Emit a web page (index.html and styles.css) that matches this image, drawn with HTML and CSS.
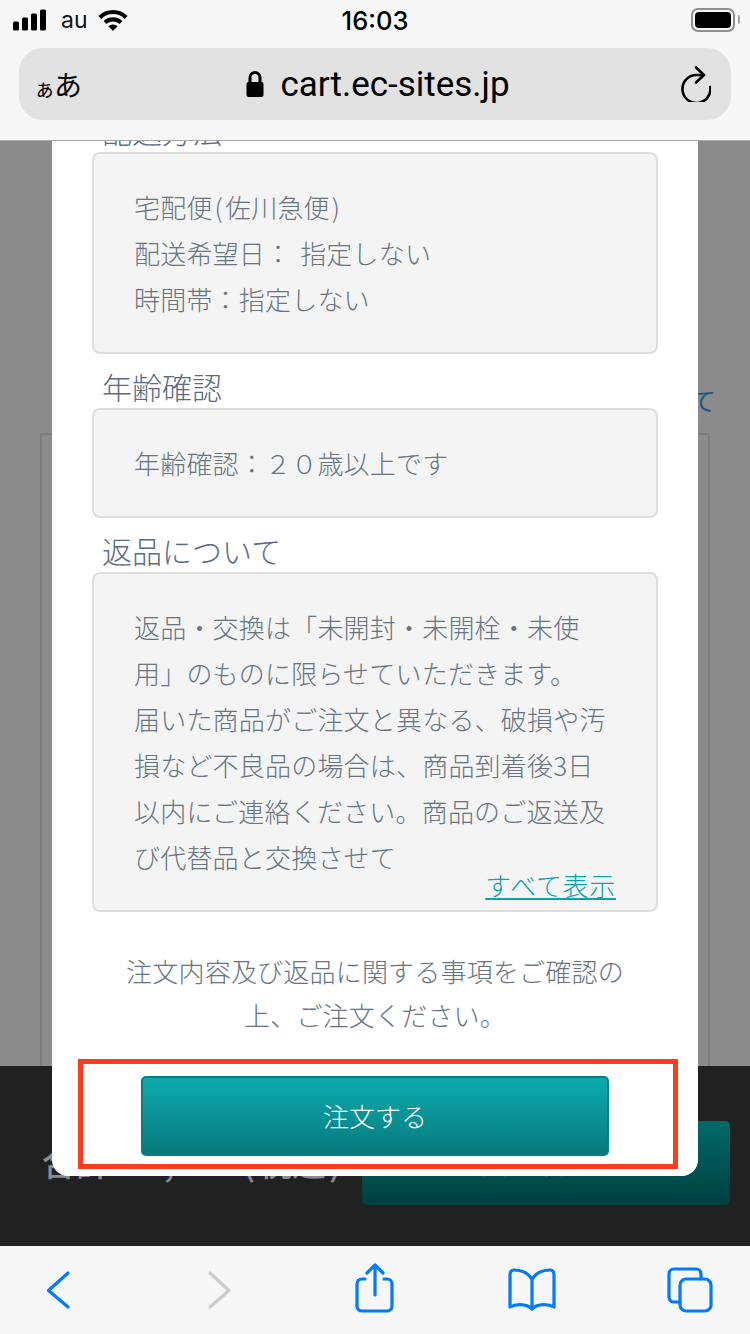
FILE: index.html
```html
<!DOCTYPE html>
<html lang="ja">
<head>
<meta charset="utf-8">
<title>注文確認</title>
<link rel="stylesheet" href="styles.css">
</head>
<body>
<div class="phone">
  <header class="chrome">
    <div class="status">
      <div class="status-left">
        <svg class="signal" viewBox="0 0 34 22"><rect x="0" y="12.500" width="6" height="9" rx="1.500"/><rect x="9" y="8.500" width="6" height="13" rx="1.500"/><rect x="18" y="4.500" width="6" height="17" rx="1.500"/><rect x="27" y="0.500" width="6" height="21" rx="1.500"/></svg>
        <span class="carrier">au</span>
        <svg class="wifi" viewBox="0 0 30 21"><path d="M15 0C9.300 0 4.200 2.200.4 5.900l2.800 3C6.300 5.900 10.400 4.100 15 4.100s8.700 1.800 11.800 4.800l2.800-3C25.800 2.200 20.700 0 15 0z"/><path d="M15 7.200c-3.700 0-7 1.400-9.500 3.800l2.900 3c1.700-1.600 4-2.600 6.600-2.600s4.900 1 6.600 2.600l2.900-3C22 8.600 18.700 7.200 15 7.200z"/><path d="M15 14.400c-1.800 0-3.400.7-4.600 1.800L15 21l4.600-4.800c-1.200-1.100-2.800-1.800-4.600-1.800z"/></svg>
      </div>
      <span class="clock">16:03</span>
      <div class="battery"><span class="battery-fill"></span></div>
    </div>
    <div class="urlbar">
      <span class="aa"><small>ぁ</small>あ</span>
      <div class="address">
        <svg class="lock" viewBox="0 0 18 26"><path class="lock-body" d="M2.500 11h13a2 2 0 0 1 2 2v11a2 2 0 0 1-2 2h-13a2 2 0 0 1-2-2V13a2 2 0 0 1 2-2z"/><path class="lock-loop" d="M4 12V6.500a5 5 0 0 1 10 0V12"/></svg>
        <span class="host">cart.ec-sites.jp</span>
      </div>
      <svg class="reload" viewBox="0 0 30 36"><path d="M22.500 9H15.300A14 14 0 1 0 29.300 21"/><path d="M15 1.500l8 7.500-8 7.500"/></svg>
    </div>
  </header>

  <main class="viewport">
    <div class="backdrop">
      <div class="bg-top">
        <span class="bg-link">すべて</span>
        <div class="bg-frame"></div>
      </div>
      <div class="bg-footer">
        <span class="bg-total">合計 ¥ 1,000 <span class="paren">(</span>税込<span class="paren">)</span></span>
        <div class="bg-button">注文を確定する</div>
      </div>
    </div>

    <section class="modal">
      <h2 class="label">配送方法</h2>
      <div class="panel">宅配便<span class="paren">(</span>佐川急便<span class="paren">)</span><br><span class="spaced">配送希望日： 指定しない</span><br>時間帯：指定しない</div>
      <h2 class="label">年齢確認</h2>
      <div class="panel">年齢確認：２０歳以上です</div>
      <h2 class="label">返品について</h2>
      <div class="panel">返品・交換は「未開封・未開栓・未使<br>用」のものに限らせていただきます。<br>届いた商品がご注文と異なる、破損や汚<br>損など不良品の場合は、商品到着後3日<br>以内にご連絡ください。商品のご返送及<br>び代替品と交換させて<a class="more" href="#">すべて表示</a></div>
      <p class="note">注文内容及び返品に関する事項をご確認の<br>上、ご注文ください。</p>
      <div class="highlight"><button class="order" type="button">注文する</button></div>
    </section>
  </main>

  <footer class="toolbar">
    <svg class="tool" viewBox="0 0 750 88"><g class="ico"><path d="M68 27 48.500 44.500 68 61"/></g><g class="ico off"><path d="M210 27l19 17.500L210 61"/></g><g class="ico"><path d="M365 33h-3a5 5 0 0 0-5 5v22a5 5 0 0 0 5 5h25a5 5 0 0 0 5-5V38a5 5 0 0 0-5-5h-3"/><path d="M375 49V20M367 27l8-8 8 8"/><path d="M532 33c-4-6-10-9-18-9-3 0-4 2-4 5v32c5-3 16-4 22 2 6-6 17-5 22-2V29c0-3-1-5-4-5-8 0-14 3-18 9zM532 33v30"/><path d="M680 56h-6a5 5 0 0 1-5-5V28a5 5 0 0 1 5-5h22a5 5 0 0 1 5 5v5"/><rect x="680" y="33" width="31" height="32" rx="6"/></g></svg>
  </footer>
</div>
</body>
</html>
```

FILE: styles.css
```css
* { box-sizing: border-box; }
html, body { margin: 0; padding: 0; }
body { font-family: "Noto Sans CJK JP", "Noto Sans", sans-serif; }

.phone { width: 750px; height: 1334px; display: flex; flex-direction: column; overflow: hidden; }

/* browser chrome */
.chrome { height: 141px; flex: none; background: #f7f7f7; border-bottom: 1px solid #a8a8a8; padding: 0 19px; position: relative; z-index: 2; }
.status { height: 48px; display: flex; align-items: center; justify-content: space-between; position: relative; margin: 0 -4px 0 -6px; padding-bottom: 8px; }
.status-left { display: flex; align-items: center; }
.signal { width: 34px; height: 22px; fill: #000; margin-right: 14px; }
.carrier { font: 400 23px/1 Inter, "Liberation Sans", sans-serif; color: #111; margin-right: 10px; }
.wifi { width: 30px; height: 21px; fill: #000; }
.clock { position: absolute; left: 317px; top: 6px; width: 90px; text-align: center; font: 500 25.500px/30px Inter, "Liberation Sans", sans-serif; color: #000; }
.battery { width: 44px; height: 24px; border: 2.500px solid #8e8e93; border-radius: 7px; padding: 2px; position: relative; }
.battery-fill { display: block; height: 100%; background: #000; border-radius: 4px; }
.battery::after { content: ""; position: absolute; right: -7px; top: 5px; width: 2.500px; height: 9px; background: #a0a0a0; border-radius: 0 2px 2px 0; }

.urlbar { height: 72px; background: #e2e2e2; border-radius: 24px; display: flex; align-items: center; justify-content: space-between; padding: 0 20px 0 15px; }
.aa { font-size: 28px; line-height: 1; color: #000; width: 49px; font-weight: 400; white-space: nowrap; letter-spacing: -1px; }
.aa small { font-size: 21px; }
.address { display: flex; align-items: center; gap: 16px; margin-right: 8px; }
.lock { width: 18px; height: 26px; }
.lock-body { fill: #000; }
.lock-loop { fill: none; stroke: #000; stroke-width: 3; }
.host { font: 400 35px/1 Roboto, "Liberation Sans", sans-serif; color: #000; }
.reload { width: 30px; height: 36px; fill: none; stroke: #000; stroke-width: 2.600; stroke-linecap: round; stroke-linejoin: round; }

/* page behind the dialog */
.viewport { flex: 1; position: relative; overflow: hidden; }
.backdrop { height: 100%; display: flex; flex-direction: column; background: #8b8b8b; }
.bg-top { flex: 1; display: flex; flex-direction: column; align-items: flex-end; padding: 236px 34px 0 40px; min-height: 0; }
.bg-link { font-size: 26px; line-height: 46px; color: #1b5a85; }
.bg-frame { align-self: stretch; flex: 1; margin: 10px 6px 0 0; border: 2px solid #7d7d7d; border-bottom: 0; }
.bg-footer { height: 180px; flex: none; background: #212121; display: flex; align-items: flex-start; padding: 55px 20px 0 42px; justify-content: space-between; }
.bg-total { font-size: 34px; line-height: 60px; padding-top: 11px; font-weight: 500; color: #8c8c8c; white-space: nowrap; }
.bg-total .paren { padding: 0 3px; }
.bg-button { width: 368px; height: 84px; border-radius: 5px; background: linear-gradient(#006a6b, #003f3f); color: #8f9f9f; font-size: 26px; line-height: 84px; text-align: center; }

/* dialog */
.modal { position: absolute; left: 52px; bottom: 70px; width: 646px; background: #fff; border-radius: 16px; padding: 0 40px 7px; color: #687480; }
.label { margin: 0; height: 54px; padding: 10px 0 0 10px; font-size: 30px; line-height: 44px; font-weight: 300; color: #5a6b82; }
.panel { position: relative; background: #f4f4f4; border: 2px solid #ddd; border-radius: 8px; padding: 30px 20px 30px 40px; font-size: 26px; line-height: 46px; font-weight: 300; letter-spacing: .2px; white-space: nowrap; }
.paren { padding: 0 2px; }
.spaced { word-spacing: 3px; }
.more { position: absolute; right: 40px; bottom: 5px; line-height: 40px; color: #0aa5a8; text-decoration: underline; letter-spacing: .7px; }
.note { margin: 37px 0 0; text-align: center; font-size: 26px; line-height: 44px; font-weight: 300; letter-spacing: .2px; white-space: nowrap; }
.highlight { margin: 22px -20px 0 -14px; border: 5px solid #ff3b1d; padding: 12px 0 8px 58px; display: flex; justify-content: flex-start; }
.order { width: 468px; height: 80px; border: 2px solid #077f82; border-radius: 5px; background: linear-gradient(#0cabaf, #067a7e); color: #fff; font: 300 26px/1 "Noto Sans CJK JP", sans-serif; }

/* bottom toolbar */
.toolbar { height: 88px; flex: none; background: #f7f7f7; position: relative; z-index: 2; }
.tool { display: block; width: 750px; height: 88px; }
.ico { fill: none; stroke: #007aff; stroke-width: 3.200; stroke-linecap: round; stroke-linejoin: round; }
.ico.off { stroke: #ccc; }
```
